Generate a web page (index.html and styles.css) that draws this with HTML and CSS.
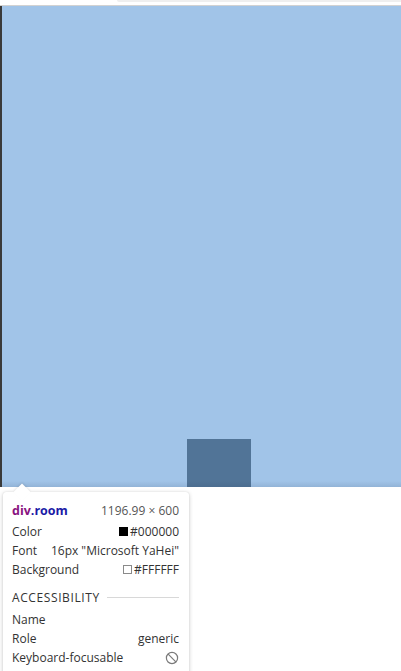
FILE: index.html
```html
<!DOCTYPE html>
<html>
<head>
<meta charset="utf-8">
<link rel="stylesheet" href="styles.css">
</head>
<body>
<div class="top"><div class="tab"></div></div>
<div class="sep"></div>
<div class="viewport">
  <div class="square"></div>
</div>
<div class="below"></div>
<div class="tip">
  <div class="arrow"></div>
  <div class="row head"><span class="sel"><span class="tag">div</span><span class="cls">.room</span></span><span class="dim">1196.99 × 600</span></div>
  <div class="row"><span>Color</span><span class="val"><i class="sw black"></i>#000000</span></div>
  <div class="row"><span>Font</span><span class="val">16px "Microsoft YaHei"</span></div>
  <div class="row"><span>Background</span><span class="val"><i class="sw white"></i>#FFFFFF</span></div>
  <div class="section"><span>ACCESSIBILITY</span><span class="line"></span></div>
  <div class="row"><span>Name</span><span></span></div>
  <div class="row"><span>Role</span><span class="val">generic</span></div>
  <div class="row"><span>Keyboard-focusable</span><span class="val"><svg width="14" height="14" viewBox="0 0 14 14"><circle cx="7" cy="7" r="5.6" fill="none" stroke="#7a7a7a" stroke-width="1.2"/><line x1="3.2" y1="3.2" x2="10.8" y2="10.8" stroke="#7a7a7a" stroke-width="1.2"/></svg></span></div>
</div>
</body>
</html>
```
FILE: styles.css
```css
html, body { margin: 0; padding: 0; }
body {
  width: 401px;
  height: 671px;
  overflow: hidden;
  background: #ffffff;
  position: relative;
  font-family: "Open Sans", "Noto Sans", sans-serif;
}
.top {
  height: 5px;
  background: #ffffff;
  display: flex;
}
.tab {
  margin-left: 117px;
  flex: 1;
  height: 2px;
  background: #efefef;
  border-bottom-left-radius: 4px;
}
.sep { height: 1px; background: #d2d2d2; }
.viewport {
  height: 481px;
  background: #a1c4e8;
  border-left: 2px solid #3a3a3a;
  display: flex;
  align-items: flex-end;
  position: relative;
}
.viewport::after {
  content: "";
  position: absolute;
  left: 0; right: 0; bottom: 0;
  height: 6px;
  background: linear-gradient(to bottom, rgba(0,0,0,0), rgba(40,60,90,0.12));
}
.square {
  margin-left: 185px;
  width: 64px;
  height: 48px;
  background: #517497;
}
.tip {
  position: absolute;
  left: 3px;
  top: 492px;
  width: 186px;
  height: 190px;
  background: #ffffff;
  border-radius: 3px;
  box-shadow: 0 1px 4px rgba(0,0,0,0.22), 0 0 1px rgba(0,0,0,0.15);
  padding: 8px 10px 0 9px;
  box-sizing: border-box;
  font-size: 12px;
  color: #333333;
}
.arrow {
  position: absolute;
  left: 13px;
  top: -6px;
  width: 12px;
  height: 12px;
  background: #ffffff;
  transform: rotate(45deg);
  box-shadow: -1px -1px 2px rgba(0,0,0,0.08);
}
.row {
  position: relative;
  display: flex;
  justify-content: space-between;
  align-items: center;
  height: 19px;
  white-space: nowrap;
}
.head { height: 20px; margin-bottom: 2px; }
.sel { font-weight: 700; font-size: 12.5px; }
.tag { color: #881280; }
.cls { color: #1a1aa6; }
.dim { color: #555555; }
.val { display: flex; align-items: center; color: #333333; }
.sw {
  display: inline-block;
  width: 9px;
  height: 9px;
  margin-right: 2px;
  box-sizing: border-box;
}
.sw.black { background: #000000; }
.sw.white { background: #ffffff; border: 1px solid #8a8a8a; }
.section {
  display: flex;
  align-items: center;
  height: 20px;
  margin-top: 8px;
  margin-bottom: 3px;
  font-size: 12px;
  letter-spacing: 0.6px;
  color: #333333;
}
.line { flex: 1; height: 1px; background: #d8d8d8; margin-left: 7px; }
```
